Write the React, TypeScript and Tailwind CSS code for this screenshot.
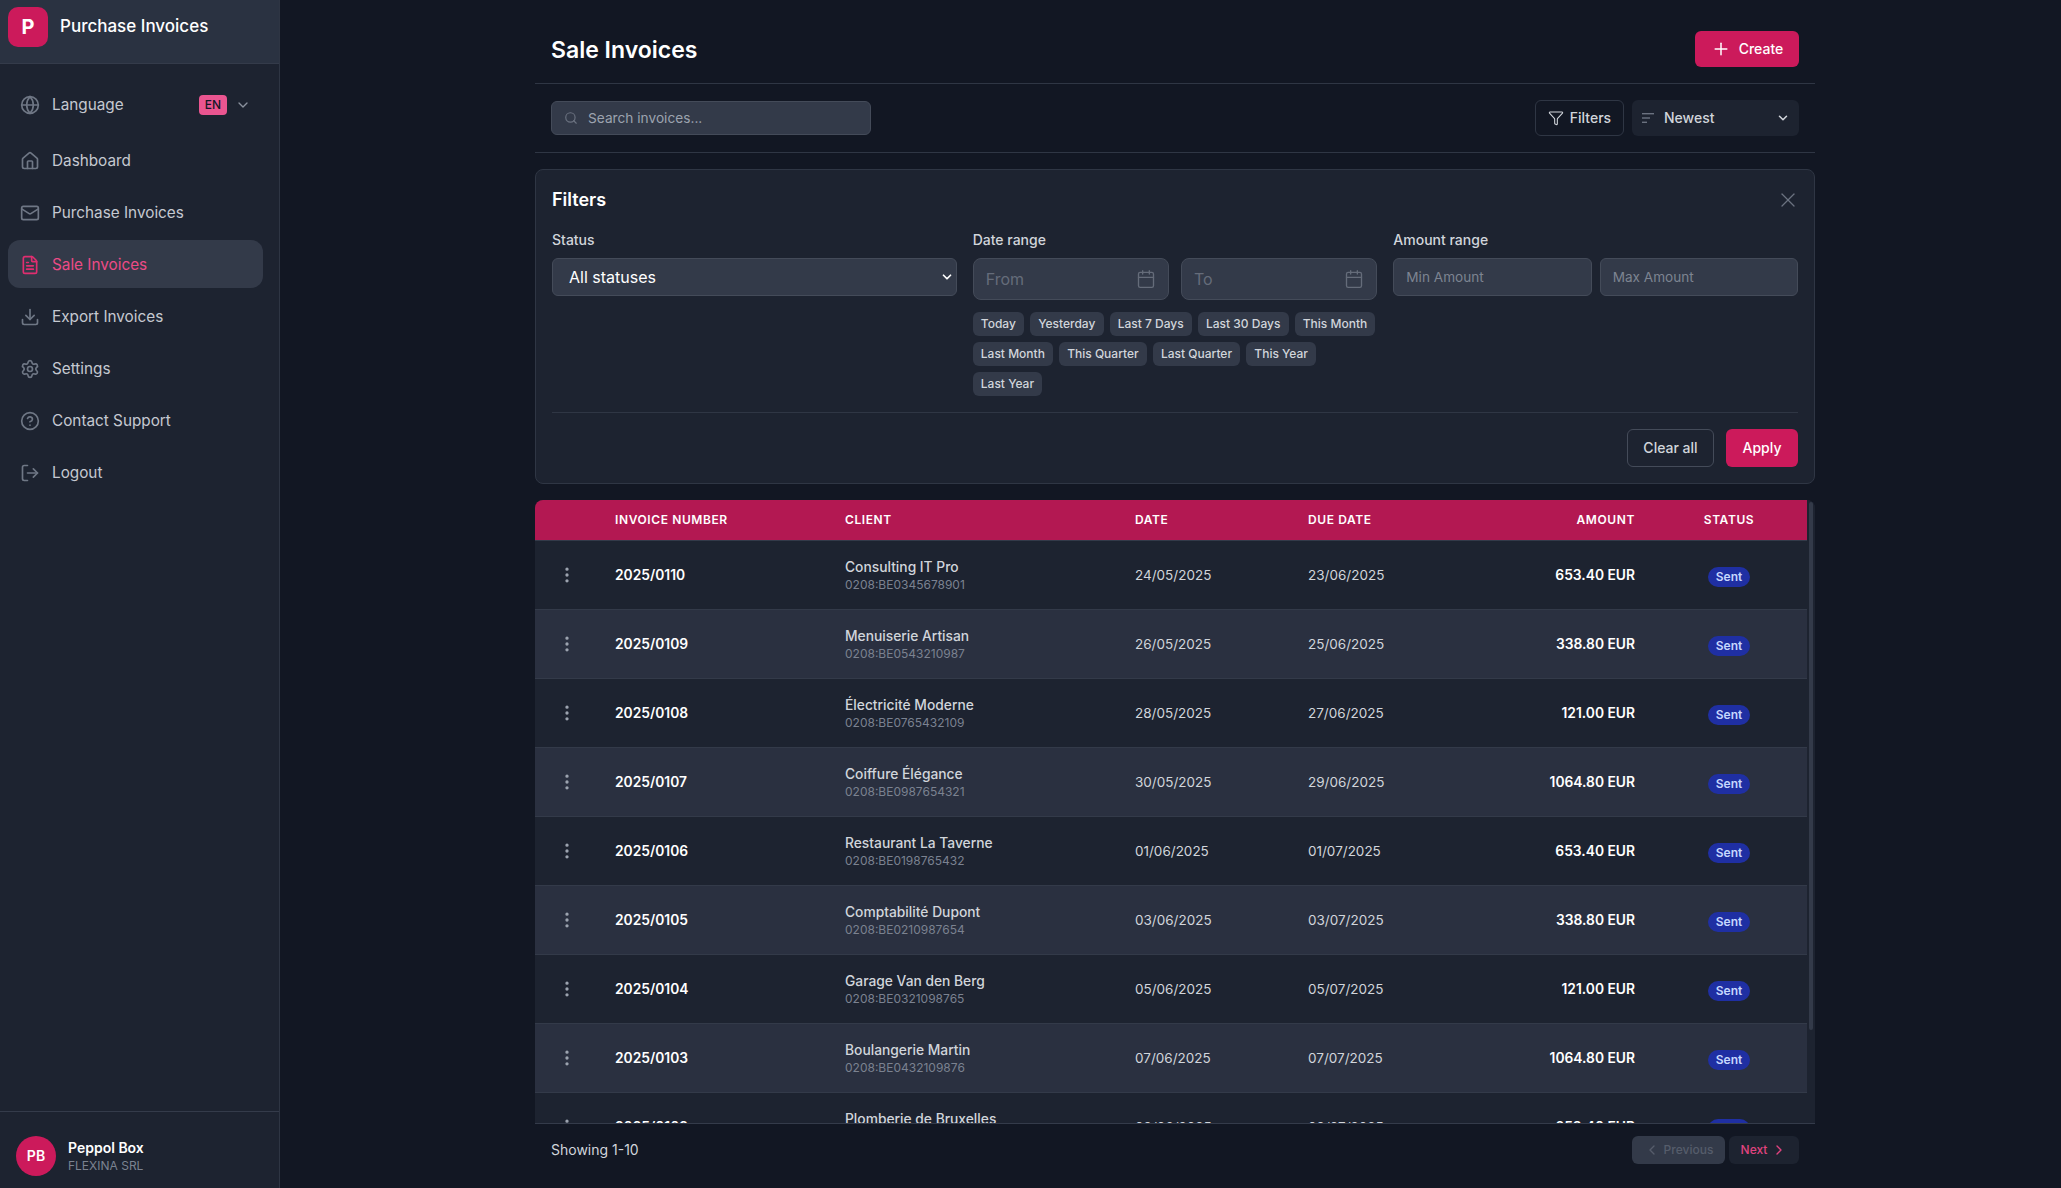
import React from 'react';
import {
  Calendar,
  ChevronDown,
  ChevronLeft,
  ChevronRight,
  CircleHelp,
  Download,
  FileText,
  Filter,
  Globe,
  House,
  LogOut,
  Mail,
  MoreVertical,
  Plus,
  Search,
  Settings,
  X,
} from 'lucide-react';

const navItems = [
  { label: 'Dashboard', icon: House },
  { label: 'Purchase Invoices', icon: Mail },
  { label: 'Sale Invoices', icon: FileText, active: true },
  { label: 'Export Invoices', icon: Download },
  { label: 'Settings', icon: Settings },
  { label: 'Contact Support', icon: CircleHelp },
  { label: 'Logout', icon: LogOut },
];

const presets = [
  'Today',
  'Yesterday',
  'Last 7 Days',
  'Last 30 Days',
  'This Month',
  'Last Month',
  'This Quarter',
  'Last Quarter',
  'This Year',
  'Last Year',
];

const invoices = [
  ['2025/0110', 'Consulting IT Pro', '0208:BE0345678901', '24/05/2025', '23/06/2025', '653.40 EUR'],
  ['2025/0109', 'Menuiserie Artisan', '0208:BE0543210987', '26/05/2025', '25/06/2025', '338.80 EUR'],
  ['2025/0108', 'Électricité Moderne', '0208:BE0765432109', '28/05/2025', '27/06/2025', '121.00 EUR'],
  ['2025/0107', 'Coiffure Élégance', '0208:BE0987654321', '30/05/2025', '29/06/2025', '1064.80 EUR'],
  ['2025/0106', 'Restaurant La Taverne', '0208:BE0198765432', '01/06/2025', '01/07/2025', '653.40 EUR'],
  ['2025/0105', 'Comptabilité Dupont', '0208:BE0210987654', '03/06/2025', '03/07/2025', '338.80 EUR'],
  ['2025/0104', 'Garage Van den Berg', '0208:BE0321098765', '05/06/2025', '05/07/2025', '121.00 EUR'],
  ['2025/0103', 'Boulangerie Martin', '0208:BE0432109876', '07/06/2025', '07/07/2025', '1064.80 EUR'],
  ['2025/0102', 'Plomberie de Bruxelles', '0208:BE0543210988', '09/06/2025', '09/07/2025', '653.40 EUR'],
  ['2025/0101', 'Pharmacie Centrale', '0208:BE0654321098', '11/06/2025', '11/07/2025', '338.80 EUR'],
];

const Sidebar = () => (
  <aside className="w-[280px] h-full shrink-0 flex flex-col bg-[#1d2330] border-r border-[#2e3543]">
    <div className="h-16 shrink-0 flex items-start pt-[7px] pl-2 gap-3 bg-[#2a3241] border-b border-[#343b4a]">
      <div className="w-10 h-10 rounded-[10px] bg-[#cc1a5b] flex items-center justify-center text-white text-xl font-bold">
        P
      </div>
      <span className="text-white text-[17px] font-medium leading-[39px]">Purchase Invoices</span>
    </div>

    <nav className="flex-1 pl-2 pr-4 pt-4">
      <div className="h-12 pl-3 pr-3 pt-[2px] flex items-center gap-3 text-[#c5c9d1] mb-2">
        <Globe size={20} className="text-[#6f7785]" />
        <span className="flex-1 text-[15.3px]">Language</span>
        <span className="w-7 h-5 rounded bg-[#ea5590] text-[#111827] text-xs font-medium flex items-center justify-center">
          EN
        </span>
        <ChevronDown size={16} className="text-[#8a919d] -ml-1" />
      </div>
      <div className="flex flex-col gap-1">
        {navItems.map(item => (
          <div
            key={item.label}
            className={`h-12 px-3 pt-[2px] flex items-center gap-3 rounded-xl text-[15.3px] ${
              item.active ? 'bg-[#333a49] text-[#ec4b86]' : 'text-[#c5c9d1]'
            }`}
          >
            <item.icon size={20} className={item.active ? 'text-[#e02e70]' : 'text-[#6f7785]'} />
            {item.label}
          </div>
        ))}
      </div>
    </nav>

    <div className="h-[77px] shrink-0 border-t border-[#343b4a] px-4 pt-6 flex items-start gap-3">
      <div className="w-10 h-10 rounded-full bg-[#cc1a5b] text-white text-sm font-semibold flex items-center justify-center">
        PB
      </div>
      <div className="flex flex-col pt-[3px]">
        <span className="text-white text-sm font-semibold leading-[18px]">Peppol Box</span>
        <span className="text-[#7b8290] text-xs leading-[18px]">FLEXINA SRL</span>
      </div>
    </div>
  </aside>
);

const DateInput = ({ placeholder }: { placeholder: string }) => (
  <div className="h-[42px] flex-1 flex items-center justify-between pl-[12px] pr-[12px] rounded-lg bg-[#333a49] border border-[#444b59] text-[#656c7a]">
    <span className="text-base">{placeholder}</span>
    <Calendar size={20} strokeWidth={1.6} />
  </div>
);

const FiltersPanel = () => (
  <section className="mt-4 h-[315px] shrink-0 rounded-lg bg-[#1d2330] border border-[#2f3644] px-4 pt-[18px]">
    <div className="flex items-center justify-between h-6">
      <h2 className="text-white text-lg font-semibold">Filters</h2>
      <X size={24} strokeWidth={1.3} className="text-[#6b7280] -mr-[2px]" />
    </div>
    <div className="grid grid-cols-3 gap-4 mt-[18px] h-[167px]">
      <div>
        <label className="block text-[#d1d5db] text-sm font-medium leading-5 mb-2">Status</label>
        <div className="relative h-[38px] rounded-md bg-[#333a49] border border-[#444b59] pl-4 flex items-center text-white text-base">
          All statuses
          <ChevronDown size={14} strokeWidth={3} className="absolute right-[2px] top-[11px]" />
        </div>
      </div>
      <div>
        <label className="block text-[#d1d5db] text-sm font-medium leading-5 mb-2">Date range</label>
        <div className="flex gap-3">
          <DateInput placeholder="From" />
          <DateInput placeholder="To" />
        </div>
        <div className="flex flex-wrap gap-[6px] mt-3">
          {presets.map(p => (
            <span key={p} className="h-6 px-[8.15px] rounded-md bg-[#333a49] text-[#d1d5db] text-xs font-medium flex items-center">
              {p}
            </span>
          ))}
        </div>
      </div>
      <div>
        <label className="block text-[#d1d5db] text-sm font-medium leading-5 mb-2">Amount range</label>
        <div className="flex gap-2">
          {['Min Amount', 'Max Amount'].map(p => (
            <div
              key={p}
              className="h-[38px] flex-1 flex items-center pl-[12px] rounded-md bg-[#333a49] border border-[#444b59] text-[#7d8491] text-[13.6px]"
            >
              {p}
            </div>
          ))}
        </div>
      </div>
    </div>
    <div className="border-t border-[#2f3644] mt-[15px] pt-4 flex justify-end gap-3">
      <button className="h-[38px] w-[87px] rounded-md border border-[#444b59] text-[#d1d5db] text-sm font-medium">
        Clear all
      </button>
      <button className="h-[38px] w-[72px] rounded-md bg-[#cc1a5b] text-white text-sm font-medium">Apply</button>
    </div>
  </section>
);

const InvoiceTable = () => (
  <div className="mt-4 flex-1 min-h-0 flex rounded-t-lg overflow-hidden bg-[#1d2330]">
    <div className="w-[1272px] h-full overflow-hidden">
      <table className="w-full table-fixed border-collapse">
        <colgroup>
          <col className="w-16" />
          <col className="w-[230px]" />
          <col className="w-[290px]" />
          <col className="w-[173px]" />
          <col className="w-[150px]" />
          <col className="w-[209px]" />
          <col className="w-[156px]" />
        </colgroup>
        <thead>
          <tr className="h-10 bg-[#b31852] text-white text-xs font-semibold uppercase tracking-wider">
            <th />
            <th className="px-4 text-left font-semibold">Invoice Number</th>
            <th className="px-4 text-left font-semibold">Client</th>
            <th className="px-4 text-left font-semibold">Date</th>
            <th className="px-4 text-left font-semibold">Due Date</th>
            <th className="px-4 text-right font-semibold">Amount</th>
            <th className="px-4 text-center font-semibold">Status</th>
          </tr>
        </thead>
        <tbody>
          {invoices.map((row, i) => (
            <tr key={row[0]} className={`h-[69px] border-t border-[#333a49] ${i % 2 ? 'bg-[#2a3040]' : 'bg-[#1d2330]'}`}>
              <td>
                <MoreVertical size={20} className="block mx-auto text-[#9ca3af]" />
              </td>
              <td className="px-4 pt-[2px] text-white text-[13.8px] font-semibold">{row[0]}</td>
              <td className="px-4">
                <div className="text-[#d1d5db] text-[13.8px] font-medium leading-5">{row[1]}</div>
                <div className="text-[#7b8290] text-xs leading-4">{row[2]}</div>
              </td>
              <td className="px-4 pt-[2px] text-[#d1d5db] text-[13.5px]">{row[3]}</td>
              <td className="px-4 pt-[2px] text-[#d1d5db] text-[13.5px]">{row[4]}</td>
              <td className="px-4 pt-[2px] text-right text-white text-[13.8px] font-semibold">{row[5]}</td>
              <td className="px-4 text-center">
                <span className="inline-flex items-center h-5 px-2 mt-[5px] rounded-full bg-[#1f2fa3] text-[#c7d7fe] text-xs font-semibold">
                  Sent
                </span>
              </td>
            </tr>
          ))}
        </tbody>
      </table>
    </div>
    {/* scrollbar strip, the headless browser hides native ones */}
    <div className="w-2 h-full shrink-0 px-[2px] pt-[2px] bg-[#1d2330]">
      <div className="h-[528px] rounded-full bg-[#333a49]" />
    </div>
  </div>
);

export default function App() {
  return (
    <div className="h-[1188px] w-[2061px] overflow-hidden flex bg-[#121723] font-['Inter',sans-serif] antialiased">
      <Sidebar />
      <main className="w-[1280px] ml-[255px] h-full flex flex-col">
        <header className="h-[84px] shrink-0 flex items-start justify-between px-4 pt-[31px] border-b border-[#2f3644]">
          <h1 className="text-white text-[23px] font-semibold leading-9 mt-px">Sale Invoices</h1>
          <button className="h-9 w-[104px] rounded-md bg-[#cc1a5b] text-white text-sm font-medium flex items-center justify-center gap-2">
            <Plus size={20} strokeWidth={1.8} /> Create
          </button>
        </header>

        <div className="h-[69px] shrink-0 flex items-center justify-between px-4 border-b border-[#2f3644]">
          <div className="w-80 h-[34px] flex items-center gap-[10px] pl-[12px] rounded-md bg-[#333a49] border border-[#444b59] text-[#9ca3af] text-[13.7px]">
            <Search size={14} className="text-[#6b7280]" />
            Search invoices...
          </div>
          <div className="flex items-center gap-2">
            <button className="h-9 w-[89px] rounded-md border border-[#2f3644] text-[#d1d5db] text-sm font-medium flex items-center justify-center gap-[6px]">
              <Filter size={16} strokeWidth={1.6} /> Filters
            </button>
            <div className="h-9 w-[167px] rounded-md bg-[#1d2330] flex items-center pl-[10px] pr-[9px] text-[#d1d5db] text-sm font-medium">
              <svg width="12" height="12" viewBox="0 0 12 12" className="text-[#6b7280] mr-[10px]" fill="currentColor">
                <rect x="0" y="1" width="12" height="1.4" />
                <rect x="0" y="5.3" width="8" height="1.4" />
                <rect x="0" y="9.6" width="5" height="1.4" />
              </svg>
              <span className="flex-1">Newest</span>
              <ChevronDown size={14} strokeWidth={2.6} />
            </div>
          </div>
        </div>

        <FiltersPanel />
        <InvoiceTable />

        <footer className="h-[65px] shrink-0 border-t border-[#343b4a] px-4 pt-3 flex items-start justify-between">
          <span className="text-[#d1d5db] text-sm leading-7">Showing 1-10</span>
          <div className="flex gap-1">
            <button className="h-7 w-[93px] rounded-md bg-[#333a49] text-[#565d6b] text-xs font-medium flex items-center justify-center gap-1">
              <ChevronLeft size={16} /> Previous
            </button>
            <button className="h-7 w-[70px] rounded-md bg-[#1d2330] text-[#e0437f] text-xs font-medium flex items-center justify-center gap-1">
              Next <ChevronRight size={16} />
            </button>
          </div>
        </footer>
      </main>
    </div>
  );
}
